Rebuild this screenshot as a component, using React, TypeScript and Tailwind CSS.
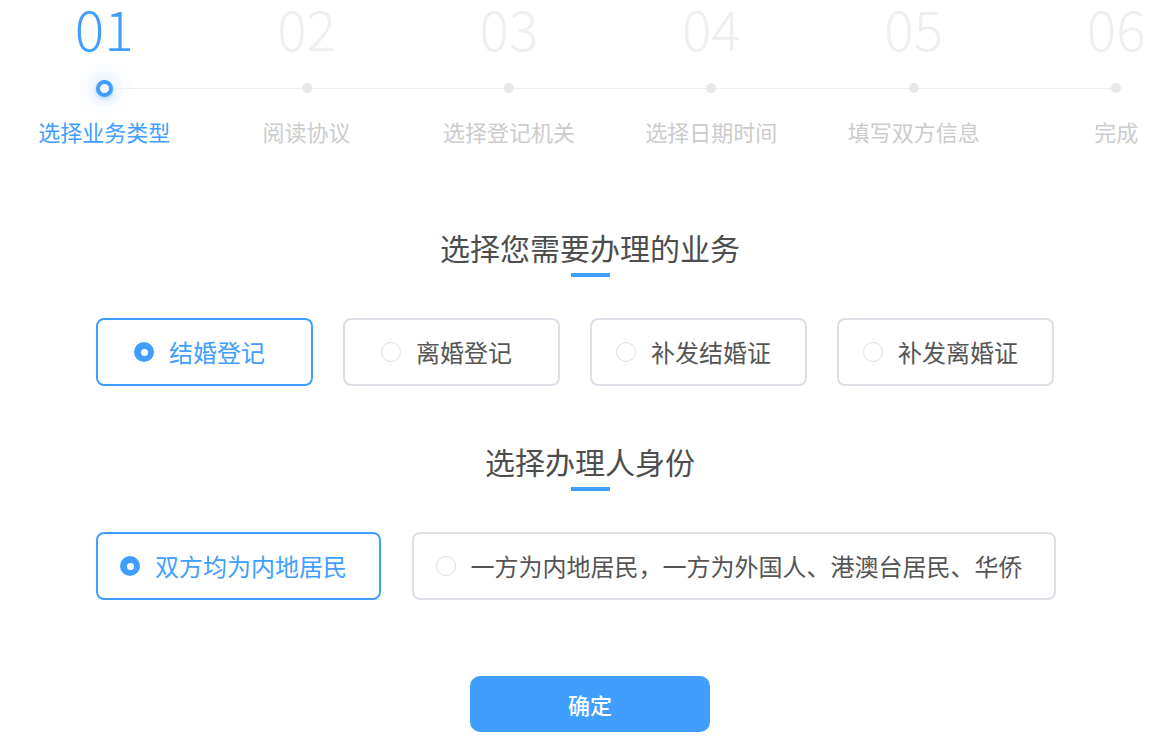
import React, { useState } from "react";

const steps = [
  { no: "01", label: "选择业务类型" },
  { no: "02", label: "阅读协议" },
  { no: "03", label: "选择登记机关" },
  { no: "04", label: "选择日期时间" },
  { no: "05", label: "填写双方信息" },
  { no: "06", label: "完成" },
];

const businessTypes = ["结婚登记", "离婚登记", "补发结婚证", "补发离婚证"];
const identities = [
  { label: "双方均为内地居民", width: "w-[285px]" },
  { label: "一方为内地居民，一方为外国人、港澳台居民、华侨", width: "w-[644px]" },
];

function Radio({ checked }: { checked: boolean }) {
  return checked ? (
    <span className="flex h-[20px] w-[20px] shrink-0 items-center justify-center rounded-full bg-[#409eff]">
      <span className="h-[7px] w-[7px] rounded-full bg-white" />
    </span>
  ) : (
    <span className="h-[20px] w-[20px] shrink-0 rounded-full border-[1.5px] border-[#dcdfe6] bg-white" />
  );
}

function Option({
  label,
  checked,
  width,
  onClick,
}: {
  label: string;
  checked: boolean;
  width: string;
  onClick: () => void;
}) {
  return (
    <button
      onClick={onClick}
      className={`flex h-[68px] ${width} shrink-0 items-center justify-center gap-[15px] rounded-[8px] border-2 bg-white pr-[10px] text-[24px] leading-none ${
        checked ? "border-[#409eff] text-[#409eff]" : "border-[#dcdfe6] text-[#555555]"
      }`}
    >
      <Radio checked={checked} />
      <span>{label}</span>
    </button>
  );
}

function Heading({ children }: { children: React.ReactNode }) {
  return (
    <div className="flex flex-col items-center">
      <h2 className="text-[30px] font-normal leading-none text-[#4d4d4d]">{children}</h2>
      <div className="mt-[11px] h-[4px] w-[39px] bg-[#409eff]" />
    </div>
  );
}

export default function App() {
  const [business, setBusiness] = useState(0);
  const [identity, setIdentity] = useState(0);
  const current = 0;

  return (
    <div
      className="h-[737px] w-[1175px] overflow-hidden bg-white"
      style={{ fontFamily: '"Noto Sans CJK SC", "Noto Sans", sans-serif' }}
    >
      <div className="w-[1180px]">
        {/* steps */}
        <div className="flex pl-[3px]">
          {steps.map((s, i) => {
            const active = i === current;
            return (
              <div key={s.no} className="flex w-[202.4px] shrink-0 flex-col items-center">
                <div
                  className={`mt-[2px] text-[55px] font-light leading-[50px] ${
                    active ? "text-[#409eff]" : "text-[#efefef]"
                  }`}
                >
                  {s.no}
                </div>
                <div className="mt-[26px] flex h-[20px] w-full items-center">
                  <div className={`h-px flex-1 ${i === 0 ? "" : "bg-[#efefef]"}`} />
                  {active ? (
                    <span className="h-[17px] w-[17px] rounded-full border-[4px] border-[#409eff] bg-white shadow-[0_2px_4px_rgba(64,158,255,0.45),0_0_0_9px_rgba(64,158,255,0.04),0_0_0_17px_rgba(64,158,255,0.025)]" />
                  ) : (
                    <span className="h-[10px] w-[10px] rounded-full bg-[#e8e8e8]" />
                  )}
                  <div className={`h-px flex-1 ${i === steps.length - 1 ? "" : "bg-[#efefef]"}`} />
                </div>
                <div
                  className={`mt-[22px] whitespace-nowrap text-[22px] leading-none ${
                    active ? "text-[#409eff]" : "text-[#cccccc]"
                  }`}
                >
                  {s.label}
                </div>
              </div>
            );
          })}
        </div>

        {/* business type */}
        <div className="mt-[90px]">
          <Heading>选择您需要办理的业务</Heading>
        </div>
        <div className="mt-[41px] flex gap-[30px] pl-[96px]">
          {businessTypes.map((b, i) => (
            <Option
              key={b}
              label={b}
              width="w-[217px]"
              checked={business === i}
              onClick={() => setBusiness(i)}
            />
          ))}
        </div>

        {/* identity */}
        <div className="mt-[60px]">
          <Heading>选择办理人身份</Heading>
        </div>
        <div className="mt-[41px] flex gap-[31px] pl-[96px]">
          {identities.map((d, i) => (
            <Option
              key={d.label}
              label={d.label}
              width={d.width}
              checked={identity === i}
              onClick={() => setIdentity(i)}
            />
          ))}
        </div>

        <div className="mt-[76px] flex justify-center">
          <button className="h-[56px] w-[240px] rounded-[10px] bg-[#409eff] text-[22px] font-medium leading-none text-white">
            确定
          </button>
        </div>
      </div>
    </div>
  );
}
